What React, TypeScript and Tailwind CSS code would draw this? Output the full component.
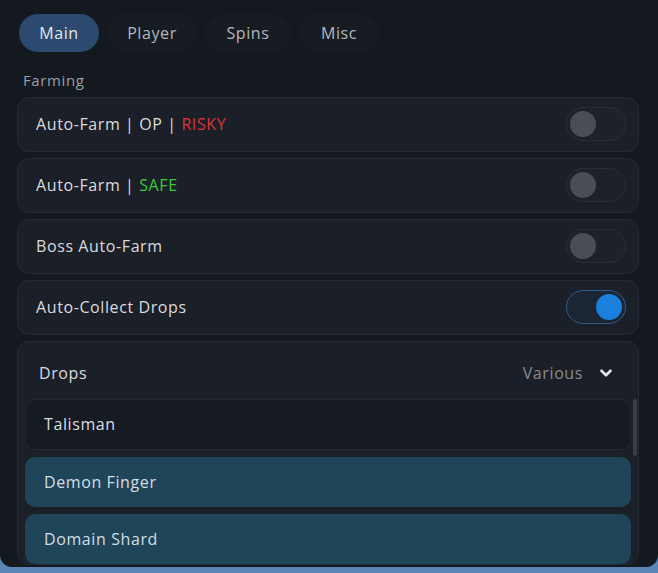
import { ChevronDown } from 'lucide-react'

function Toggle({ on }: { on?: boolean }) {
  return on ? (
    <div className="flex h-[34px] w-[60px] items-center justify-end rounded-full border border-[#2f5c8c] bg-[#1b2533] px-[3px]">
      <div className="h-[26px] w-[26px] rounded-full bg-[#1a80dc]" />
    </div>
  ) : (
    <div className="flex h-[34px] w-[60px] items-center rounded-full border border-[#2a2f37] bg-[#1d2129] px-[3px]">
      <div className="h-[26px] w-[26px] rounded-full bg-[#4a4d54]" />
    </div>
  )
}

function Row({ children, on }: { children: React.ReactNode; on?: boolean }) {
  return (
    <div className="flex h-[55px] items-center justify-between rounded-xl border border-[#262b33] bg-[#1b1f27] pl-[18px] pr-[12px]">
      <span className="text-[16px] text-[#d9dbde]">{children}</span>
      <Toggle on={on} />
    </div>
  )
}

const tabs = [
  { name: 'Main', w: 'w-[80px]' },
  { name: 'Player', w: 'w-[90px]' },
  { name: 'Spins', w: 'w-[86px]' },
  { name: 'Misc', w: 'w-[80px]' },
]

export default function App() {
  return (
    <div
      className="h-[573px] w-[658px] overflow-hidden bg-[#5a85b4] tracking-[0.6px]"
      style={{ fontFamily: '"Open Sans", sans-serif' }}
    >
      <div className="flex h-[567px] flex-col overflow-hidden rounded-b-[12px] bg-[#141920] pl-[17px] pr-[19px] pt-[14px]">
        <div className="flex gap-[8px] pl-[2px]">
          {tabs.map((t, i) => (
            <div
              key={t.name}
              className={
                i === 0
                  ? `flex h-[38px] ${t.w} items-center justify-center rounded-full bg-[#2c4a6f] text-[16px] text-[#e2e6eb]`
                  : `flex h-[38px] ${t.w} items-center justify-center rounded-full bg-[#171c23] text-[16px] text-[#b3b7bc]`
              }
            >
              {t.name}
            </div>
          ))}
        </div>
        <div className="mt-[17px] pl-[6px] text-[15px] text-[#9a9fa5]">Farming</div>
        <div className="mt-[5px] flex flex-col gap-[6px]">
          <Row>
            Auto-Farm | OP | <span className="text-[#d9343a]">RISKY</span>
          </Row>
          <Row>
            Auto-Farm | <span className="text-[#3ec83a]">SAFE</span>
          </Row>
          <Row>Boss Auto-Farm</Row>
          <Row on>Auto-Collect Drops</Row>
          <div className="rounded-xl border border-[#262b33] bg-[#1b1f27]">
            <div className="flex h-[57px] items-center justify-between pl-[21px] pr-[23px] pt-[5px]">
              <span className="text-[16px] text-[#d9dbde]">Drops</span>
              <div className="flex items-center gap-[14px]">
                <span className="text-[16px] text-[#878c93]">Various</span>
                <ChevronDown size={18} strokeWidth={3.5} className="text-[#e4e6e9]" />
              </div>
            </div>
            <div className="flex gap-[2px] pl-[7px] pr-[1px]">
              <div className="flex flex-1 flex-col gap-[7px]">
                <div className="flex h-[51px] items-center rounded-[10px] border border-[#242930] bg-[#161a21] pl-[18px] text-[16px] text-[#dcdee1]">
                  Talisman
                </div>
                <div className="flex h-[50px] items-center rounded-[10px] bg-[#1f4559] pl-[19px] text-[16px] text-[#d3dde4]">
                  Demon Finger
                </div>
                <div className="flex h-[50px] items-center rounded-[10px] bg-[#1f4559] pl-[19px] text-[16px] text-[#d3dde4]">
                  Domain Shard
                </div>
              </div>
              <div className="w-[4px]">
                <div className="h-[57px] rounded-full bg-[#3a3f47]" />
              </div>
            </div>
          </div>
        </div>
      </div>
    </div>
  )
}
